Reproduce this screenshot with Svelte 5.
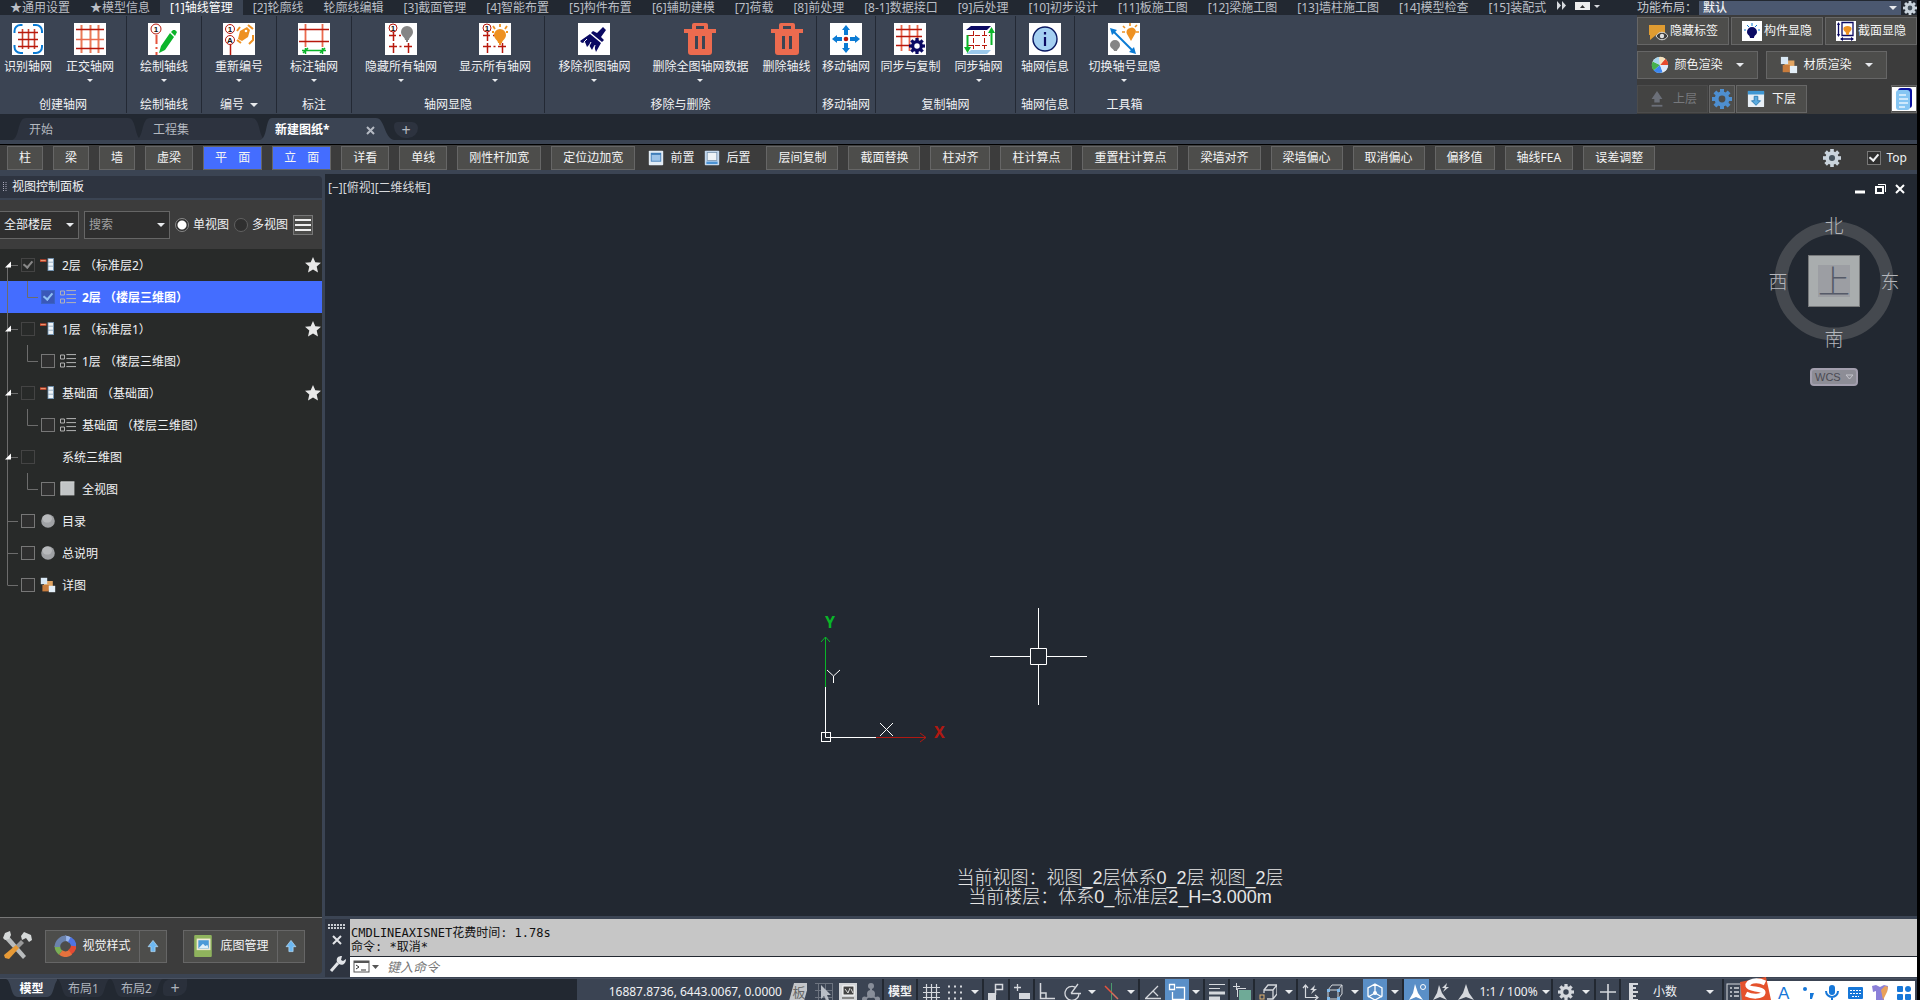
<script lang="ts">
  type Cell = { icon?: string; text?: string; w: number; on?: boolean; sep?: boolean; arrow?: boolean; label?: string; lit?: boolean };

  const tabs = [
    '★通用设置', '★模型信息', '[1]轴线管理', '[2]轮廓线', '轮廓线编辑', '[3]截面管理', '[4]智能布置', '[5]构件布置',
    '[6]辅助建模', '[7]荷载', '[8]前处理', '[8-1]数据接口', '[9]后处理', '[10]初步设计', '[11]板施工图', '[12]梁施工图',
    '[13]墙柱施工图', '[14]模型检查', '[15]装配式'
  ];

  const groups = [
    { title: '创建轴网', w: 127, items: [{ t: '识别轴网', i: 'detect' }, { t: '正交轴网', i: 'ortho', a: 1, tail: 1 }] },
    { title: '绘制轴线', w: 75, items: [{ t: '绘制轴线', i: 'draw', a: 1 }] },
    { title: '编号', more: 1, w: 75, items: [{ t: '重新编号', i: 'renum', a: 1 }] },
    { title: '标注', w: 75, items: [{ t: '标注轴网', i: 'dim', a: 1 }] },
    { title: '轴网显隐', w: 193, items: [{ t: '隐藏所有轴网', i: 'hide', a: 1, tail: 1 }, { t: '显示所有轴网', i: 'show', a: 1 }] },
    { title: '移除与删除', w: 272, items: [{ t: '移除视图轴网', i: 'brush', a: 1, tail: 1, inset: 1 }, { t: '删除全图轴网数据', i: 'trash', a: 1 }, { t: '删除轴线', i: 'trash' }] },
    { title: '移动轴网', w: 59, items: [{ t: '移动轴网', i: 'move' }] },
    { title: '复制轴网', w: 140, items: [{ t: '同步与复制', i: 'synccopy' }, { t: '同步轴网', i: 'sync', a: 1, tail: 1 }] },
    { title: '轴网信息', w: 59, items: [{ t: '轴网信息', i: 'info' }] },
    { title: '工具箱', w: 99, items: [{ t: '切换轴号显隐', i: 'toggle', a: 1 }] }
  ] as { title: string; more?: number; w: number; items: { t: string; i: string; a?: number; tail?: number; inset?: number }[] }[];

  const toolsA = ['柱', '梁', '墙', '虚梁', '平 面', '立 面', '详看', '单线', '刚性杆加宽', '定位边加宽'];
  const toolsB = ['层间复制', '截面替换', '柱对齐', '柱计算点', '重置柱计算点', '梁墙对齐', '梁墙偏心', '取消偏心', '偏移值', '轴线FEA', '误差调整'];

  const rows = [
    { t: '2层 （标准层2）', k: 'p', i: 'floor', dim: true, on: true, star: true, open: true, first: true },
    { t: '2层 （楼层三维图）', k: 'c', i: 'list', on: true, sel: true },
    { t: '1层 （标准层1）', k: 'p', i: 'floor', dim: true, star: true, open: true },
    { t: '1层 （楼层三维图）', k: 'c', i: 'list' },
    { t: '基础面 （基础面）', k: 'p', i: 'floor', dim: true, star: true, open: true },
    { t: '基础面 （楼层三维图）', k: 'c', i: 'list' },
    { t: '系统三维图', k: 'p', i: 'none', dim: true, open: true },
    { t: '全视图', k: 'c', i: 'square' },
    { t: '目录', k: 'p', i: 'ball' },
    { t: '总说明', k: 'p', i: 'ball' },
    { t: '详图', k: 'p', i: 'boxes', last: true }
  ] as { t: string; k: string; i: string; dim?: boolean; on?: boolean; star?: boolean; open?: boolean; first?: boolean; sel?: boolean; last?: boolean }[];

  const status: Cell[] = [
    { icon: 'slab', label: '板', w: 26 }, { icon: 'pick', label: '选择', w: 25 }, { icon: 'screen', label: '显示', w: 23 }, { icon: 'node', label: '节点', w: 25, sep: true },
    { text: '模型', w: 34, sep: true, lit: true },
    { icon: 'hash', label: '栅格', w: 25 }, { icon: 'dots', label: '捕捉', w: 24 }, { arrow: true, w: 17, sep: true },
    { icon: 'infer', label: '推断约束', w: 26, sep: true }, { icon: 'dyn', label: '动态输入', w: 25, sep: true },
    { icon: 'orthoMode', label: '正交', w: 24 }, { icon: 'polar', label: '极轴', w: 25 }, { arrow: true, w: 16 },
    { icon: 'iso', label: '等轴测', w: 24 }, { arrow: true, w: 16, sep: true },
    { icon: 'angle', label: '追踪', w: 25 }, { icon: 'osnap', label: '对象捕捉', w: 24, on: true }, { arrow: true, w: 16, sep: true },
    { icon: 'weight', label: '线宽', w: 25, sep: true }, { icon: 'trans', label: '透明度', w: 25, sep: true },
    { icon: 'cycle', label: '选择循环', w: 26 }, { arrow: true, w: 17, sep: true },
    { icon: 'ucs', label: '动态坐标', w: 25 }, { icon: 'cubeSel', label: '过滤', w: 24 }, { arrow: true, w: 16 },
    { icon: 'gizmo', label: '小控件', w: 24, on: true }, { arrow: true, w: 17, sep: true },
    { icon: 'ann1', label: '注释可见', w: 25, on: true }, { icon: 'ann2', label: '自动缩放', w: 24 }, { icon: 'ann3', label: '注释比例', w: 25 },
    { text: '1:1 / 100%', arrow: true, w: 75, sep: true },
    { icon: 'cog', label: '工作空间', w: 25 }, { arrow: true, w: 18, sep: true }, { icon: 'plus', label: '监视器', w: 25, sep: true },
    { icon: 'ruler', text: '小数', arrow: true, w: 103, sep: true }, { icon: 'props', label: '特性', w: 22 }
  ];

  const W = '<rect width="32" height="32" fill="#fff"/>';
  const gear = (cx: number, cy: number, r: number, fill: string, hole: string, n = 8) => {
    let s = '';
    for (let i = 0; i < n; i++) s += `<rect x="${cx - r * 0.2}" y="${cy - r}" width="${r * 0.4}" height="${r * 0.5}" fill="${fill}" transform="rotate(${(i * 360) / n} ${cx} ${cy})"/>`;
    return s + `<circle cx="${cx}" cy="${cy}" r="${r * 0.74}" fill="${fill}"/><circle cx="${cx}" cy="${cy}" r="${r * 0.34}" fill="${hole}"/>`;
  };
  const num = (x: number, y: number, r: number, ch: string) =>
    `<circle cx="${x}" cy="${y}" r="${r}" fill="#fff" stroke="#b8180c"/><text x="${x}" y="${y + 3}" font-size="8" font-weight="700" font-family="Liberation Sans, sans-serif" text-anchor="middle" fill="#111">${ch}</text>`;
  const dashGrid = '<path d="M4 12.500h7M4 23.500h8m7 0h8M8.500 9v9M8.500 20v10M23.500 20v10" stroke="#b8180c" stroke-width="1.500"/><path d="M14 12.500h2M14.500 23.500h2" stroke="#b8180c" stroke-width="1.500"/>';
  const bulb = (x: number, y: number, c: string) => `<path d="M${x} ${y - 6}a6 6 0 0 1 6 6c0 4-4 5-4 8h-4c0-3-4-4-4-8a6 6 0 0 1 6-6z" fill="${c}"/><rect x="${x - 1}" y="${y + 8}" width="2" height="2" fill="${c}"/>`;

  const art: Record<string, string> = {
    detect: W + '<path d="M2.500 10V8a6 6 0 0 1 6-6h2M21 2h3a6 6 0 0 1 6 6v2M30 22v2a6 6 0 0 1-6 6h-3M11 30H8.500a6 6 0 0 1-6-6v-2" fill="none" stroke="#0b7bd4" stroke-width="2"/><path d="M10.500 6v20M16.500 6v20M22.500 6v20" stroke="#c8402c" stroke-width="1.600"/><path d="M6 9.500h20M6 16.500h20M6 23.500h20" stroke="#b8180c" stroke-width="1.400"/>',
    ortho: W + '<path d="M7.500 2v28M16.500 2v28M24.500 2v28" stroke="#ea7a58" stroke-width="2"/><path d="M2 6.500h28M2 25.500h28" stroke="#b8180c" stroke-width="1.500"/><path d="M2 16.500h28" stroke="#ea6a4e" stroke-width="1.500"/>',
    draw: W + '<path d="M8.500 12v9m0 3v2m0 3v3" stroke="#e5533d" stroke-width="2"/>' + num(8, 6, 5, '1') + '<path d="M11 30l2-7 9-13 4 4-9 13zM23 9l2-2h2l2 2-1 2-1 2z" fill="#0cb52b"/>',
    renum: W + '<path d="M7.500 20v12" stroke="#b8180c" stroke-width="1.500"/>' + num(7, 6, 4.5, '1') + num(7, 17, 4.5, 'A') + '<path d="M14 8l3-4M14 17l4 3M25 2l5 4M30 12v5l-4 4" stroke="#ee9122" stroke-width="2" fill="none"/><path d="M15 16l2-8 7-4 3 3-2 7-6 4z" fill="#ee9122"/><circle cx="23" cy="8" r="1.300" fill="#fff"/>',
    dim: W + '<path d="M7.500 1v23M24.500 1v23" stroke="#ea6a4e" stroke-width="1.800"/><path d="M1 6.500h30M1 18.500h30" stroke="#b8180c" stroke-width="1.500"/><path d="M4 27.500h24M7.500 25v6M24.500 25v6M5 30l5-5M22 30l5-5" stroke="#0cb52b" stroke-width="1.500"/>',
    hide: W + dashGrid + num(8, 5, 4, '1') + bulb(22, 9, '#858585'),
    show: W + dashGrid + num(8, 5, 4, '1') + bulb(21, 12, '#ee9122') + '<path d="M21 1v3M14 3l2 3M28 3l-2 3M13 9h2M27 9h2" stroke="#ee9122" stroke-width="1.800"/>',
    brush: W + '<path d="M25 4l3 3-5 7 3 3-2 2-11-9 2-2 4 2zM12 11l11 9-5 9-2-6-2 4-3-5-2 2-2-5-3 1-2-2z" fill="#0b0a63"/><path d="M9 16l-3 3M13 19l-2 4M17 22l-1 4" stroke="#fff"/>',
    trash: '<path d="M0 6h8V2a2 2 0 0 1 2-2h12a2 2 0 0 1 2 2v4h8v4h-4v19a3 3 0 0 1-3 3H7a3 3 0 0 1-3-3V10H0zM12 3v3h8V3z" fill="#ec6b4f" fill-rule="evenodd"/><path d="M12.500 13v13M19.500 13v13" stroke="#3b4453" stroke-width="3"/>',
    move: W + '<path d="M16 2l4 5h-2v5h-4V7h-2zM16 30l4-5h-2v-5h-4v5h-2zM2 16l5-4v2h5v4H7v2zM30 16l-5-4v2h-5v4h5v2z" fill="#0b7bd4"/><circle cx="16" cy="16" r="2.300" fill="#b8180c"/>',
    synccopy: W + '<path d="M7.500 2v26M15.500 2v26M23.500 2v16" stroke="#ea6a4e" stroke-width="1.800"/><path d="M2 6.500h26M2 13.500h26M2 22.500h14" stroke="#b8180c" stroke-width="1.500"/>' + gear(23, 23, 8, '#0b0a63', '#fff'),
    sync: W + '<path d="M8 3h20l-4 4H3z" fill="#0b0a63"/><path d="M8 27h20l-4 4H3z" fill="#9bc9ec"/><path d="M10.500 8v18M21.500 8v18M5 12.500h22M5 22.500h20" stroke="#b8180c" stroke-dasharray="5 2"/><path d="M4.500 12v15M28.500 8v14" stroke="#0cb52b" stroke-width="2"/><path d="M1 24h7l-3.500 6zM25 10h7l-3.500-6z" fill="#0cb52b"/>',
    info: W + '<circle cx="16" cy="16" r="12" fill="#a5d0f2" stroke="#0b1a63" stroke-width="1.400"/><path d="M16 14v9M16 9v2.500" stroke="#0b0a63" stroke-width="2.200"/>',
    toggle: W + '<path d="M5 8l20 20" stroke="#0b7bd4" stroke-width="2"/><path d="M2 5l7 2-5 5zM28 31l-7-2 5-5z" fill="#0b7bd4"/><path d="M22 5a4 4 0 0 1 5 6l-4 7-4-7a4 4 0 0 1 3-6z" fill="#ee9122"/><path d="M22 0v3M15 3l2 2M29 2l-2 2M14 9h3M28 9h3" stroke="#ee9122" stroke-width="1.600"/><path d="M7 17a5 5 0 0 1 5 5c0 3-3 4-3 6H6c0-2-4-3-4-6a5 5 0 0 1 5-5z" fill="#858585"/>',
    tag: '<path d="M1 4h16v10h-9l-6 5V14H1z" fill="#e09c31"/><path d="M8 15c3-5 9-5 12 0-3 5-9 5-12 0z" fill="#3c3c3c" stroke="#ddd"/><circle cx="14" cy="15" r="2.200" fill="#ddd"/>',
    bulbNavy: '<rect width="20" height="20" fill="#fff"/><path d="M10 6a5 5 0 0 1 5 5c0 3-3 3-3 6H8c0-3-3-3-3-6a5 5 0 0 1 5-5z" fill="#0b0a63"/><path d="M10 2v3M5 4l2 2M15 4l-2 2M2 9h2M16 9h2" stroke="#0b7bd4"/>',
    bulbFrame: '<rect width="20" height="20" fill="#fff"/><path d="M6 1.500h11v13H6zM2.500 2v13M5 18h12" fill="none" stroke="#0b0a63" stroke-width="1.300"/><path d="M1 4l1.500-3L4 4zM1 13l1.500 3L4 13zM7 16l-3 2 3 2zM15 16l3 2-3 2z" fill="#0b0a63"/><path d="M11.500 5c5 0 5 4 2 6l-1 3h-2l-1-3c-3-2-3-6 2-6z" fill="#ee9122"/>',
    wheel: '<circle cx="10" cy="10" r="9" fill="#f0f0e0"/><path d="M10 10L2 6A9 9 0 0 0 3 16z" fill="#45b04c"/><path d="M10 10L3 16a9 9 0 0 0 10 2z" fill="#3b86ef"/><path d="M10 10l3 8a9 9 0 0 0 6-8z" fill="#dfe9fb"/><path d="M10 10h9a9 9 0 0 0-3-7z" fill="#e8492c"/><path d="M10 10L2 6a9 9 0 0 1 7-5z" fill="#a7d5ef"/><path d="M10 10L16 3a9 9 0 0 0-7-2z" fill="#f6e2bd"/>',
    boxes: '<rect x="5" y="5" width="11" height="11" fill="#e0a462"/><rect x="3" y="10" width="8" height="8" fill="#c87c3c"/><rect x="1" y="1" width="8" height="8" fill="#d9e8f5"/><rect x="11" y="11" width="8" height="8" fill="#e4eff8"/>',
    up: '<path d="M10 1l6 9h-3v4H7v-4H4z" fill="#6b6f78"/><path d="M4 17.500h12" stroke="#6b6f78" stroke-width="2"/>',
    gearBlue: gear(10, 10, 10, '#4e8fd0', '#4d4d4b'),
    gearGrey: gear(10, 10, 10, '#c9d3dc', '#46535e'),
    down: '<rect x="1" y="1" width="18" height="18" rx="1" fill="#e8eff5"/><rect x="1" y="1" width="18" height="4" fill="#3f97d3"/><path d="M8 7h4v5h3l-5 5-5-5h3z" fill="#5aaade" stroke="#2878b0"/>',
    pages: '<rect width="24" height="24" fill="#fff"/><rect x="6" y="1" width="14" height="20" rx="3" fill="#0b12a0"/><rect x="4" y="3" width="14" height="20" rx="3" fill="#86c6f3"/><path d="M7 8h7M7 12h9M7 16h9M7 20h6" stroke="#e8f5ff" stroke-width="1.400"/>',
    front: '<rect x="1" y="1" width="18" height="18" rx="1" fill="#e3ecf5"/><rect x="4" y="4" width="12" height="10" fill="#9dc3e8" stroke="#3877b5"/><path d="M4 5h12" stroke="#3877b5" stroke-width="2"/>',
    back: '<rect x="1" y="1" width="18" height="18" rx="1" fill="#c3d8ee"/><rect x="4" y="3" width="12" height="10" fill="#eef3f7" stroke="#7893ad"/><path d="M3 16h14" stroke="#4a92d4" stroke-width="3"/>',
    floor: '<rect x="0" y="3" width="8" height="3" fill="#d9492c"/><path d="M1 4.500h6" stroke="#eeb48a"/><rect x="10" y="2" width="7" height="15" fill="#eef3f7" stroke="#6f93b5"/><path d="M10 6.500h7M10 11.500h7" stroke="#8ba4bb"/>',
    list: '<path d="M.6 2.500h5v5h-5zM.6 12.500h5v5h-5zM8 2h12M8 7h12M8 12h12M8 17h12" fill="none" stroke="#b4b4b4" stroke-width="1.250"/>',
    square: '<rect x="1" y="1" width="17" height="17" fill="#c2c5c6"/><path d="M1 18V1h17" fill="none" stroke="#e2e4e4"/>',
    ball: '<circle cx="10" cy="10" r="8.500" fill="#a0a2a5"/><ellipse cx="9" cy="7" rx="6" ry="5" fill="#b7b9bb"/>',
    none: '',
    ring: '<g fill="none" stroke-width="5"><path d="M10 3a8 8 0 0 1 5 1.800" stroke="#9ab7ee"/><path d="M14 4a8 8 0 0 1 4 7" stroke="#4f74e4"/><path d="M18 10a8 8 0 0 1-4 6" stroke="#e44a33"/><path d="M15 16a8 8 0 0 1-9 0" stroke="#e5723d"/><path d="M6 16a8 8 0 0 1-3-6" stroke="#7aae55"/><path d="M3 11a8 8 0 0 1 8-8" stroke="#6c83ad"/></g>',
    photo: '<rect x="2" y="0" width="16" height="20" rx="1" fill="#8fb35d"/><rect x="5" y="4" width="11" height="9" fill="#4a9ad8" stroke="#f0ead4" stroke-width="1.500"/><path d="M6 12l4-4 2 2 2-1 1 3z" fill="#dff0fa"/>',
    arrowUp: '<path d="M10 2l7 9h-4v7H7v-7H3z" fill="#6db8f2" stroke="#b9dffa"/>',
    tools: '<path d="M5 4l19 22-3 3L2 8z" fill="#b9bcbd"/><path d="M1 8l2-5 5-2 1 4-2 4-4 1zM19 6l3-4 7 3 1 5-3 2-3-4-4 2z" fill="#d5d8d8"/><path d="M19 10l3 3-5 5-3-3z" fill="#999"/><path d="M14 15l3 3L7 29l-4-1-1-3z" fill="#e79a36"/>',
    slab: '<path d="M5 0h15l-5 18H0z" fill="#c3c6ca"/><text x="10" y="14" font-size="13" font-family="Noto Sans CJK SC, sans-serif" text-anchor="middle" fill="#666">板</text>',
    pick: '<path d="M0 .5h18M0 7.500h18M0 14.500h18M3.500 0v18M10.500 0v18M17.500 0v18" stroke="#6d7480"/><path d="M6 2v14l3-3 3 5 2-1-2-5h4z" fill="#b9bec6"/>',
    screen: '<rect x="0" y="0" width="18" height="18" fill="#d4d6d9"/><rect x="4" y="3" width="11" height="9" fill="#444" stroke="#fff"/><path d="M6 6l3 4M11 5l-2 5M12 6l2 4" stroke="#ddd"/><path d="M3 15h12" stroke="#888" stroke-width="2"/>',
    node: '<path d="M9 4v8l-6 4M9 12l6 4" stroke="#888e99" stroke-width="2" fill="none"/><circle cx="9" cy="3" r="3" fill="#888e99"/><circle cx="9" cy="11" r="4" fill="#888e99"/><circle cx="2.500" cy="16" r="2.500" fill="#888e99"/><circle cx="15.500" cy="16" r="2.500" fill="#888e99"/>',
    hash: '<path d="M4.500 1v16M9.500 1v16M14.500 1v16M1 4.500h17M1 9.500h17M1 14.500h17" stroke="#d5d8dd" stroke-width="1.200"/>',
    dots: '<path d="M2 3.500h14M2 9.500h14M2 15.500h14" stroke="#d5d8dd" stroke-width="2" stroke-dasharray="2 4"/>',
    infer: '<path d="M8.500 12V1.500h7v5h-7" fill="none" stroke="#d5d8dd" stroke-width="1.500"/><rect x="1" y="10" width="8" height="8" fill="#d5d8dd"/>',
    dyn: '<path d="M4.500 1v7M1 4.500h7" stroke="#d5d8dd" stroke-width="1.300"/><rect x="6" y="10" width="11" height="6" fill="#d5d8dd"/>',
    orthoMode: '<path d="M2.500 0v15.500H17M2 10h6v6" fill="none" stroke="#d5d8dd" stroke-width="1.500"/>',
    polar: '<path d="M16 10a7 7 0 1 1-4-6M8 10.500h10M8 10.500L15 1" fill="none" stroke="#d5d8dd" stroke-width="1.300"/>',
    iso: '<path d="M8.500 0v18" stroke="#4b9a6c"/><path d="M2 3l7 7" stroke="#e5533d" stroke-width="1.500"/><path d="M9 10l6 6" stroke="#d5705d" stroke-width="1.500"/>',
    angle: '<path d="M1 15.500h16M2 15L14 3M9 8l5 5" fill="none" stroke="#d5d8dd" stroke-width="1.300"/>',
    osnap: '<path d="M8 4.500h8.500v12h-12V9M1.500 1.500h5v5h-5z" fill="none" stroke="#fff" stroke-width="1.300"/>',
    weight: '<path d="M1 1.500h16M1 5.500h11" stroke="#d5d8dd"/><path d="M1 10h16" stroke="#d5d8dd" stroke-width="3"/><path d="M1 15.500h11" stroke="#d5d8dd" stroke-width="4"/>',
    trans: '<path d="M3.500 0v7M0 3.500h7" stroke="#d5d8dd"/><path d="M4.500 14V5.500H13" fill="none" stroke="#d5d8dd"/><rect x="6" y="7" width="12" height="11" fill="#6faa97"/>',
    cycle: '<path d="M5 7l4-5h9v9l-4 5H8M5 10V7h9v9M14 7l4-5" fill="none" stroke="#d5d8dd" stroke-width="1.300"/><rect x="1" y="12" width="4" height="4" fill="none" stroke="#e0b070"/>',
    ucs: '<path d="M3.500 15V2M1 5l2.500-3L6 5M3 14.500h13M13 12l3 2.500-3 2.500" fill="none" stroke="#d5d8dd" stroke-width="1.200"/><path d="M13 2l-5 5h3l-2 4 6-5h-3z" fill="#d5d8dd"/>',
    cubeSel: '<path d="M2 7h10v9H2zM2 7l4-5h10v9l-4 5M12 7l4-5" fill="none" stroke="#d5d8dd"/><path d="M1 6h3v3H1zM11 6h3v3h-3zM1 14h3v3H1zM11 14h3v3h-3z" fill="#7fb9ec"/>',
    gizmo: '<path d="M9 1l7 4v8l-7 4-7-4V5zM9 1v9M9 10l7 4M9 10l-7 4" fill="none" stroke="#fff" stroke-width="1.300"/><circle cx="9" cy="10" r="2" fill="#fff"/>',
    ann1: '<path d="M7 1l3 9 5 7-7-3-7 3 4-7z" fill="#fff"/><circle cx="15" cy="4" r="2.500" fill="none" stroke="#fff"/>',
    ann2: '<path d="M7 2l3 8 5 7-7-3-7 3 4-7z" fill="#d5d8dd"/><path d="M15 0l-5 5h3l-2 4 6-5h-3z" fill="#d5d8dd"/>',
    ann3: '<path d="M9 1l3 9 5 7-8-3-8 3 5-7z" fill="#d5d8dd"/>',
    cog: gear(9, 9, 8, '#d5d8dd', '#3b4453'),
    plus: '<path d="M9 1v16M1 9h16" stroke="#d5d8dd" stroke-width="1.600"/>',
    ruler: '<path d="M4 0h4v18H4z" fill="#d5d8dd"/><path d="M8 1h5M8 5h3M8 9h5M8 13h3M8 17h5" stroke="#d5d8dd" stroke-width="2"/>',
    props: '<rect x="1" y="1" width="14" height="17" fill="none" stroke="#d5d8dd"/><path d="M4 5h2M4 9h2M4 13h2M8 5h5M8 9h5M8 13h5" stroke="#d5d8dd" stroke-width="1.500"/>'
  };
  let floor = $state('全部楼层');
  let view = $state('single');
</script>

{#snippet pic(name: string, cls: string, box: number)}
  <svg class={cls} viewBox="0 0 {box} {box}" aria-hidden="true">{@html art[name]}</svg>
{/snippet}

<div class="app">
  <header class="top">
    <div class="lead">
      <nav class="tabs">
        {#each tabs as t, n}<button class="tab" class:active={n === 2}>{t}</button>{/each}
        <button class="more" aria-label="更多">
          <svg width="46" height="12" viewBox="0 0 46 12"><path d="M1 1l4 4.500L1 10zM6 1l4 4.500L6 10z" fill="#d7dadf" /><rect x="19" y="2" width="15" height="8" fill="#eee" /><path d="M24 8h5l-2.500-3z" fill="#333" /><path d="M38 5h6l-3 3z" fill="#d7dadf" /></svg>
        </button>
      </nav>
      <div class="ribbon">
        {#each groups as g}
          <section class="group" style:width="{g.w}px">
            <div class="items">
              {#each g.items as it}
                <button class="item" class:tail={it.tail} class:inset={it.inset}>
                  {@render pic(it.i, 'i32', 32)}
                  <span>{it.t}</span>
                  {#if it.a}<i class="caret tiny"></i>{/if}
                </button>
              {/each}
            </div>
            <h2>{g.title}{#if g.more}<i class="caret"></i>{/if}</h2>
          </section>
        {/each}
      </div>
    </div>
    <aside class="side">
      <div class="layout">
        <label for="layout">功能布局：</label>
        <div class="drop grow"><select id="layout"><option>默认</option></select><i class="caret"></i></div>
        {@render pic('gearGrey', 'i14', 20)}
      </div>
      <div class="line three">
        <button class="btn">{@render pic('tag', 'i20', 20)}隐藏标签</button>
        <button class="btn">{@render pic('bulbNavy', 'i20', 20)}构件显隐</button>
        <button class="btn">{@render pic('bulbFrame', 'i20', 20)}截面显隐</button>
      </div>
      <div class="line two">
        <button class="btn">{@render pic('wheel', 'i18', 20)}颜色渲染<i class="caret"></i></button>
        <button class="btn">{@render pic('boxes', 'i18', 20)}材质渲染<i class="caret"></i></button>
      </div>
      <div class="line levels">
        <button class="btn lvl" disabled>{@render pic('up', 'i18', 20)}上层</button>
        <button class="btn sq" aria-label="设置">{@render pic('gearBlue', 'i20', 20)}</button>
        <button class="btn lvl">{@render pic('down', 'i18', 20)}下层</button>
        <button class="btn sq end" aria-label="图纸">{@render pic('pages', 'i24', 24)}</button>
      </div>
    </aside>
  </header>

  <nav class="docs">
    <button class="doc">开始</button>
    <button class="doc">工程集</button>
    <button class="doc cur">新建图纸*<svg width="9" height="9" viewBox="0 0 9 9"><path d="M1 1l7 7M8 1L1 8" stroke="#b5bac3" stroke-width="2" /></svg></button>
    <button class="add">+</button>
  </nav>

  <div class="bar">
    {#each toolsA as t, n}<button class="btn tool" class:blue={n === 4 || n === 5}>{t}</button>{/each}
    <button class="plain first">{@render pic('front', 'i16', 20)}前置</button>
    <button class="plain last">{@render pic('back', 'i16', 20)}后置</button>
    {#each toolsB as t}<button class="btn tool">{t}</button>{/each}
    <button class="plain gearbtn" aria-label="设置">{@render pic('gearGrey', 'i18', 20)}</button>
    <label class="topbox"><input type="checkbox" class="box" checked />Top</label>
  </div>

  <main>
    <div class="left">
      <h1><svg width="4" height="10" viewBox="0 0 4 10"><path d="M.5 0v10M3 0v10" stroke="#aab" stroke-dasharray="1 1" /></svg>视图控制面板</h1>
      <div class="filter">
        <div class="drop field a"><select bind:value={floor} aria-label="楼层"><option>全部楼层</option></select><i class="caret"></i></div>
        <div class="drop field b"><input type="text" placeholder="搜索" aria-label="搜索" /><i class="caret"></i></div>
        <label><input type="radio" value="single" bind:group={view} />单视图</label>
        <label><input type="radio" value="multi" bind:group={view} />多视图</label>
        <button class="menu" aria-label="菜单"><svg width="16" height="14" viewBox="0 0 16 14"><path d="M0 2h16M0 7h16M0 12h16" stroke="#f0f0f0" stroke-width="2" /></svg></button>
      </div>
      <ul class="tree">
        {#each rows as r}
          <li class:sel={r.sel}>
            {#if r.k === 'p'}
              <svg width="21" height="32" viewBox="0 0 21 32"><path d="M7.500 {r.first ? 16 : 0}V{r.last ? 16 : 32}M7.500 16.500H18" stroke="#6c6c6c" fill="none" />{#if r.open}<path d="M5 18.500h6v-6z" fill="#fff" />{/if}</svg>
            {:else}
              <svg width="41" height="32" viewBox="0 0 41 32"><path d="M7.500 0V32M27.500 0V16.500H38" stroke="#6c6c6c" fill="none" /></svg>
            {/if}
            <label><input type="checkbox" class="box" class:dim={r.dim} checked={r.on} />{@render pic(r.i, 'i16', 20)}<span>{r.t}</span></label>
            {#if r.star}<svg class="star" width="16" height="16" viewBox="0 0 16 16"><path d="M8 0l2.300 5.300 5.700.5-4.300 3.800L13 15.500 8 12.400 3 15.500l1.300-5.900L0 5.800l5.700-.5z" fill="#e8e8e8" /></svg>{/if}
          </li>
        {/each}
      </ul>
      <div class="foot">
        {@render pic('tools', 'i32', 32)}
        <div class="split"><button class="btn">{@render pic('ring', 'i22', 20)}视觉样式</button><button class="btn up" aria-label="展开视觉样式">{@render pic('arrowUp', 'i14', 20)}</button></div>
        <div class="split"><button class="btn">{@render pic('photo', 'i22', 20)}底图管理</button><button class="btn up" aria-label="展开底图管理">{@render pic('arrowUp', 'i14', 20)}</button></div>
      </div>
    </div>

    <div class="right">
      <div class="canvas">
        <div class="vp">[−][俯视][二维线框]</div>
        <div class="win">
          <svg width="52" height="14" viewBox="0 0 52 14"><path d="M1 10h10" stroke="#fff" stroke-width="3" /><path d="M24 2.500h7.500V10" fill="none" stroke="#fff" /><rect x="22" y="5" width="7" height="6" fill="none" stroke="#fff" stroke-width="2" /><path d="M42 3l8 8M50 3l-8 8" stroke="#fff" stroke-width="2" /></svg>
        </div>
        <svg class="ucs" width="140" height="136" viewBox="0 0 140 136">
          <path d="M8.500 25V75" stroke="#09b528" /><path d="M4 30l4.500-5L13 30" fill="none" stroke="#09b528" />
          <path d="M8.500 75v50.500H59" fill="none" stroke="#fff" /><rect x="4.500" y="120.500" width="9" height="9" fill="none" stroke="#fff" />
          <path d="M59 125.500h50" stroke="#b01912" /><path d="M103 121l6 4.500-6 4.500" fill="none" stroke="#b01912" />
          <path d="M10 58l6.500 6L23 58M16.500 64v7M63 111l13 13M76 111l-13 13" fill="none" stroke="#fff" />
          <text x="8" y="16" fill="#09b528">Y</text><text x="117" y="126" fill="#b01912">X</text>
        </svg>
        <svg class="cross" width="98" height="98" viewBox="0 0 98 98"><path d="M0 48.500h40M57 48.500h40M48.500 0v40M48.500 57v40M40.500 40.500h16v16h-16z" fill="none" stroke="#fff" /></svg>
        <svg class="compass" width="140" height="180" viewBox="0 0 140 180">
          <circle cx="70" cy="66" r="53" fill="none" stroke="#45494f" stroke-width="13" />
          <rect x="44.500" y="40.500" width="51" height="51" fill="#a9adae" stroke="#77797b" /><rect x="54" y="50" width="32" height="32" fill="#9c9ea3" />
          <g fill="#b4b6bb" text-anchor="middle" font-size="19"><text x="70" y="18">北</text><text x="70" y="131">南</text><text x="14" y="74">西</text><text x="126" y="74">东</text></g>
          <text x="70" y="78" font-size="32" fill="#555a68" text-anchor="middle">上</text>
          <rect x="47" y="154" width="46" height="16" rx="3" fill="#8d8d96" stroke="#a39fae" stroke-width="2" />
          <text class="wcs" x="51" y="166">WCS</text><path d="M82 160h7l-3.500 4z" fill="none" stroke="#c5c5cc" />
        </svg>
        <p class="note">当前视图：视图_2层体系0_2层 视图_2层<br />当前楼层：体系0_标准层2_H=3.000m</p>
      </div>
      <div class="cmd">
        <div class="grip"><svg width="20" height="56" viewBox="0 0 20 56"><path d="M1 5h18M1 8h18" stroke="#c8ccd2" stroke-width="2" stroke-dasharray="2 1" /><path d="M6 16l8 8M14 16l-8 8" stroke="#e2e4e8" stroke-width="2" /><path d="M4 51l7-8" stroke="#e2e4e8" stroke-width="3" /><path d="M15 36l-1 4 2 1 3-2c0 5-4 7-7 5l-2-2c-1-4 1-6 5-6z" fill="#e2e4e8" /></svg></div>
        <div class="io">
          <pre>CMDLINEAXISNET花费时间: 1.78s
命令: *取消*</pre>
          <div class="entry">
            <svg width="26" height="14" viewBox="0 0 26 14"><rect x="1" y="1" width="15" height="11" fill="#fff" stroke="#555" /><path d="M1 2h15" stroke="#555" stroke-width="2" /><path d="M3 5l3 2-3 2M8 10h5" fill="none" stroke="#333" /><path d="M19 5h7l-3.500 4z" fill="#555" /></svg>
            <input type="text" placeholder="键入命令" aria-label="命令" />
          </div>
        </div>
      </div>
    </div>
  </main>

  <footer>
    <nav class="sheets">
      <button class="sheet now">模型</button><button class="sheet">布局1</button><button class="sheet">布局2</button><button class="sheet plus">+</button>
    </nav>
    <div class="status">
      <output>16887.8736, 6443.0067, 0.0000</output>
      {#each status as c}
        <button class="cell" class:on={c.on} class:sep={c.sep} class:lit={c.lit} class:spread={c.icon && c.text} style:width="{c.w}px" aria-label={c.label ?? c.text ?? '选项'}>
          {#if c.icon}{@render pic(c.icon, 'i18', 18)}{/if}{#if c.text}<span>{c.text}</span>{/if}{#if c.arrow}<i class="caret"></i>{/if}
        </button>
      {/each}
    </div>
    <div class="ime">
      <svg width="178" height="24" viewBox="0 0 178 24">
        <rect x="26" y="5" width="151" height="19" fill="#fff" />
        <path d="M2 6l26-5 5 23H4z" fill="#e5522c" /><path d="M27 7c-8-4-18-2-17 3 1 4 16 2 15 7-1 4-11 4-17 1" fill="none" stroke="#fff" stroke-width="5" />
        <g fill="#1677d8"><text x="40" y="23" font-size="17">A</text><circle cx="67" cy="13" r="2" /><path d="M72 17h4l-2 6h-2z" /><rect x="91" y="9" width="6" height="10" rx="3" /><path d="M88 15a6 6 0 0 0 12 0M94 21v3" fill="none" stroke="#1677d8" stroke-width="2" /><rect x="110" y="11" width="15" height="12" rx="1" /><path d="M112 14.500h11M112 17.500h11M114 20.500h7" stroke="#fff" stroke-dasharray="2 1" /><path d="M134 10l4-1 4 2 4-2 4 1-1 6-3-1v9h-8v-9l-3 1z" fill="#8b80d8" /><path d="M143 14l4-4 3 1-1 5-4 8z" fill="#e9a05a" /><rect x="159" y="10" width="6" height="6" rx="1" /><rect x="167" y="10" width="6" height="6" rx="3" /><rect x="159" y="18" width="6" height="6" rx="1" /><rect x="167" y="18" width="6" height="6" rx="1" /></g>
      </svg>
    </div>
  </footer>
</div>

<style>
  :global(body) { margin: 0; background: #222831; }
  .app { height: 100vh; box-sizing: border-box; border-right: 3px solid #000; display: flex; flex-direction: column; overflow: hidden; position: relative; background: #3b4453; color: #f0f1f3; font: 12px/16px "Noto Sans", "Noto Sans CJK SC", sans-serif; }
  button, input, select { font: inherit; color: inherit; margin: 0; padding: 0; border: 0; background: none; box-sizing: border-box; border-radius: 0; }
  button { white-space: nowrap; display: flex; align-items: center; justify-content: center; }
  svg { flex: none; display: block; }
  h1, h2, p, ul, pre { margin: 0; padding: 0; font: inherit; }
  :global(svg.i14) { width: 14px; height: 14px; }
  :global(svg.i16) { width: 16px; height: 16px; }
  :global(svg.i18) { width: 18px; height: 18px; }
  :global(svg.i20) { width: 20px; height: 20px; }
  :global(svg.i22) { width: 22px; height: 22px; }
  :global(svg.i24) { width: 24px; height: 24px; }
  :global(svg.i32) { width: 32px; height: 32px; }
  .caret { flex: none; width: 0; height: 0; border: 4px solid transparent; border-top-color: #e8eaed; border-bottom: 0; }
  .caret.tiny { border-width: 3px; border-bottom: 0; margin-top: 4px; }

  .top { display: flex; }
  .lead { flex: 1; min-width: 0; }
  .tabs { display: flex; height: 15px; background: #222831; }
  .tab { padding: 0 10px; height: 15px; line-height: 15px; color: #bbbfc6; align-items: flex-start; }
  .tab.active { background: #3b4453; color: #fff; }
  .more { height: 12px; }
  .ribbon { display: flex; height: 99px; }
  .group { box-sizing: border-box; border-right: 1px solid #232934; margin: 1px 0; display: flex; flex-direction: column; justify-content: space-between; }
  .group:last-child { border: 0; }
  .items { display: flex; justify-content: center; gap: 14px; }
  .item { flex-direction: column; justify-content: flex-start; padding-top: 7px; }
  .item span { margin-top: 4px; }
  .item.tail { margin-right: 8px; }
  .item.inset { margin-left: 8px; }
  h2 { display: flex; justify-content: center; align-items: center; gap: 6px; }

  .side { width: 280px; background: #3c3c3c; display: flex; flex-direction: column; }
  .layout { height: 15px; background: #222831; display: flex; align-items: center; line-height: 14px; gap: 2px; margin-bottom: 2px; }
  .layout label { width: 60px; white-space: nowrap; color: #c8cbd0; }
  .drop { display: flex; align-items: center; position: relative; }
  .drop select, .drop input { appearance: none; width: 100%; outline: 0; }
  .drop .caret { position: absolute; right: 4px; top: 50%; margin-top: -2px; pointer-events: none; }
  .grow { flex: 1; background: #4b5870; height: 14px; padding-left: 4px; font-weight: 500; }
  .line { display: flex; height: 28px; margin-bottom: 6px; }
  .three { gap: 2px; }
  .three .btn { flex: 1; gap: 2px; }
  .two { gap: 8px; }
  .two .btn { width: 121px; gap: 5px; }
  .two .caret { margin-left: 8px; }
  .levels { gap: 1px; margin-bottom: 1px; }
  .lvl { width: 71px; gap: 7px; }
  .sq { width: 26px; }
  .end { margin-left: auto; }
  .btn { background: #4d4d4b; border: 1px solid #666; color: #f4f4f4; }
  .btn:disabled { background: #434342; border-color: #4c4c4c; color: #77797d; }

  .docs { display: flex; align-items: flex-end; height: 26px; background: #222831; padding-left: 12px; }
  .doc { width: 130px; margin-right: -6px; height: 22px; padding-top: 2px; padding-left: 17px; justify-content: flex-start; background: #2d333f; color: #b4b8bf; clip-path: path("M0 22C8 20 5 0 14 0H116C125 0 122 20 130 22Z"); }
  .doc.cur { background: #3b4453; color: #fff; font-weight: 700; width: 134px; justify-content: space-between; padding-right: 19px; padding-left: 15px; clip-path: path("M0 22C8 20 5 0 12 0H116C125 0 124 20 134 22Z"); }
  .add { width: 24px; height: 16px; margin: 0 0 2px 6px; background: #2d333f; color: #b4b8bf; font-size: 16px; border-radius: 4px 6px 10px 12px; }

  .bar { margin-top: 4px; border-top: 1px solid #000; height: 25px; display: flex; gap: 10px; align-items: center; padding-left: 7px; background: #3c3c3c; margin-bottom: 4px; }
  .tool { height: 24px; padding: 0 11px; flex: none; }
  .tool.blue { background: #446dff; word-spacing: 8px; }
  .plain { gap: 6px; flex: none; }
  .first { margin-left: 3px; }
  .last { margin-right: 6px; }
  .gearbtn { margin-left: auto; }
  .topbox { display: flex; align-items: center; gap: 6px; font-size: 12px; margin: 0 10px 0 16px; }
  .box { appearance: none; width: 14px; height: 14px; border: 1px solid #777; background: #2f2f2f; position: relative; flex: none; }
  .box.dim { border-color: #444; background: none; color: #888; }
  .box:checked::after { content: ""; position: absolute; left: 3px; top: 0; width: 4px; height: 7px; border: solid currentColor; border-width: 0 2px 2px 0; transform: rotate(40deg); }

  main { flex: 1; display: flex; min-height: 0; }
  .left { width: 322px; margin: 2px 3px 4px 0; display: flex; flex-direction: column; flex: none; }
  h1 { background: #2e3440; height: 22px; display: flex; align-items: center; gap: 5px; padding-left: 3px; margin-bottom: 2px; border-radius: 0 4px 0 0; }
  .filter { background: #3c3c3c; height: 49px; display: flex; align-items: center; box-sizing: border-box; }
  .filter label { display: flex; align-items: center; gap: 4px; margin-right: 5px; }
  .field { height: 28px; border: 1px solid #666; background: #2f2f2f; box-sizing: border-box; padding-left: 4px; margin-right: 5px; }
  .field.a { width: 79px; border-left: 0; }
  .field.b { width: 86px; }
  .field input::placeholder { color: #a0a0a0; opacity: 1; }
  .filter input[type="radio"] { appearance: none; width: 14px; height: 14px; border: 1px solid #606060; border-radius: 50%; background: #2f2f2f; }
  .filter input[type="radio"]:checked { background: radial-gradient(circle, #fff 0 4px, #2f2f2f 5px); border-color: #888; }
  .menu { width: 20px; height: 20px; border: 1px solid #777; background: #4d4d4b; }
  .tree { flex: 1; background: #282a29; list-style: none; }
  .tree li { display: flex; align-items: center; height: 32px; padding-right: 1px; }
  .tree label { display: flex; align-items: center; flex: 1; gap: 5px; }
  .tree label span { padding: 2px 0 0 1px; }
  .tree .sel { background: #446dff; font-weight: 700; color: #fff; }
  .sel .box { background: #3a58b8; border-color: #3a62c8; color: #8fc0f5; }
  .foot { height: 57px; box-sizing: border-box; border-top: 1px solid #777; background: #3c3c3c; display: flex; align-items: center; padding-left: 2px; gap: 16px; border-radius: 0 0 4px 0; }
  .foot > :global(svg) { margin-right: -5px; }
  .split { display: flex; height: 33px; }
  .split .btn { width: 95px; gap: 6px; }
  .split .up { width: 28px; margin-left: -1px; }

  .right { flex: 1; display: flex; flex-direction: column; min-width: 0; }
  .canvas { flex: 1; background: #222831; position: relative; }
  .vp { position: absolute; left: 3px; top: 6px; color: #d8dadd; }
  .win { position: absolute; right: 11px; top: 8px; }
  .ucs { position: absolute; left: 31%; top: 60%; margin: -7px 0 0 -2px; font: 700 16px "Noto Sans", sans-serif; }
  .cross { position: absolute; left: 42%; top: 58%; margin: 4px 0 0 -4px; }
  .compass { position: absolute; right: 13px; top: 41px; font-family: "Noto Sans CJK SC", sans-serif; font-weight: 300; }
  .wcs { font: 11px "Liberation Sans", sans-serif; fill: #4a4a52; }
  .note { position: absolute; left: 0; right: 2px; bottom: 9px; text-align: center; font: 300 18px/19px "Liberation Sans", "Noto Sans CJK SC", sans-serif; color: #e6e6e6; }
  .cmd { display: flex; height: 58px; margin: 3px 0 1px; }
  .grip { width: 25px; background: #2e3440; padding: 1px 2px; box-sizing: border-box; }
  .io { flex: 1; display: flex; flex-direction: column; }
  pre { background: #c6c6c6; color: #111; flex: 1; border-bottom: 1px solid #222831; font: 12px/14px "DejaVu Sans Mono", "Noto Sans CJK SC", monospace; padding: 7px 1px 0; box-sizing: border-box; }
  .entry { height: 20px; background: #fff; display: flex; align-items: center; gap: 8px; padding-left: 3px; }
  .entry input { flex: 1; color: #333; outline: 0; font: italic 13px/18px "Noto Sans CJK SC", sans-serif; }
  .entry input::placeholder { color: #777; opacity: 1; }

  footer { display: flex; justify-content: space-between; height: 21px; background: #222831; border-top: 1px solid #4a5261; flex: none; }
  .sheets { display: flex; padding-left: 6px; }
  .sheet { width: 53px; height: 19px; background: #2a303b; color: #aeb3bb; clip-path: path("M0 0H53C47 2 49 18 41 18H12C4 18 6 2 0 0Z"); }
  .sheet.now { background: #3b4453; color: #fff; font-weight: 700; width: 51px; }
  .sheet.plus { width: 24px; height: 17px; clip-path: none; font-size: 16px; border-radius: 8px 0 10px 4px; }
  .status { display: flex; background: #3b4453; overflow: hidden; padding: 0 171px 0 32px; }
  output { padding: 5px 3px 0 0; white-space: nowrap; line-height: 15px; }
  .cell { flex: none; height: 25px; gap: 4px; }
  .cell.sep { border-right: 2px solid #222831; }
  .cell.on { background: #5a8fc7; }
  .cell.lit { font-weight: 700; }
  .spread span { margin: 0 auto 0 6px; }
  .spread { padding: 0 8px 0 4px; }
  .ime { position: absolute; right: 1px; bottom: 0; font-family: "Liberation Sans", sans-serif; }
</style>
